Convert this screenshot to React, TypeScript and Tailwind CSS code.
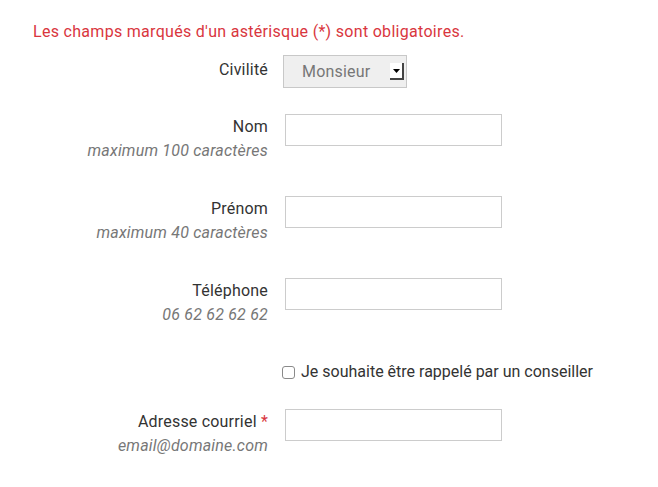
import React from "react";

type Field = {
  label: string;
  hint: string;
  required?: boolean;
};

const TOP_FIELDS: Field[] = [
  { label: "Nom", hint: "maximum 100 caractères" },
  { label: "Prénom", hint: "maximum 40 caractères" },
  { label: "Téléphone", hint: "06 62 62 62 62" },
];

function LabelBlock({ label, hint, required }: Field) {
  return (
    <div className="w-[268px] shrink-0 pt-[2px] text-right">
      <div className="leading-[22px] text-[#333]">
        {label}
        {required && <span className="text-[#d9363e]">&nbsp;*</span>}
      </div>
      <div className="mt-[2px] leading-[22px] italic text-[#777]">{hint}</div>
    </div>
  );
}

function TextRow(field: Field) {
  return (
    <div className="flex gap-[17px]">
      <LabelBlock {...field} />
      <input
        type="text"
        className="h-[32px] w-[217px] border border-[#ccc] bg-white outline-none"
      />
    </div>
  );
}

export default function App() {
  return (
    <div
      className="min-h-[487px] w-[658px] bg-white pt-[21px] text-[16px] tracking-[0.2px]"
      style={{ fontFamily: "Roboto, 'Liberation Sans', sans-serif" }}
    >
      <p className="pl-[33px] leading-[22px] tracking-[0.3px] text-[#d9363e]">
        Les champs marqués d'un astérisque (*) sont obligatoires.
      </p>

      {/* Civilité */}
      <div className="mt-[12px] flex gap-[15px]">
        <div className="w-[268px] shrink-0 pt-[4px] text-right leading-[22px] text-[#333]">
          Civilité
        </div>
        <div className="flex h-[33px] w-[124px] items-center border border-[#c8c8c8] bg-[#efefef] pl-[18px] pr-[2px]">
          <span className="flex-1 text-[#777]">Monsieur</span>
          <div className="flex h-[17px] w-[14px] items-center justify-center border-r-2 border-b-2 border-r-[#444] border-b-[#444] bg-white">
            <svg width="7" height="4" viewBox="0 0 7 4">
              <path d="M0 0h7L3.5 4z" fill="#000" />
            </svg>
          </div>
        </div>
      </div>

      <div className="mt-[26px] flex flex-col gap-[34px]">
        {TOP_FIELDS.map((f) => (
          <TextRow key={f.label} {...f} />
        ))}
      </div>

      {/* Rappel */}
      <label className="mt-[35px] flex items-center pl-[282px] leading-[22px] tracking-normal text-[#333]">
        <span className="h-[13px] w-[13px] rounded-[3px] border border-[#8a8a8a] bg-white" />
        <span className="ml-[6px]">Je souhaite être rappelé par un conseiller</span>
      </label>

      <div className="mt-[26px]">
        <TextRow label="Adresse courriel" hint="email@domaine.com" required />
      </div>
    </div>
  );
}
